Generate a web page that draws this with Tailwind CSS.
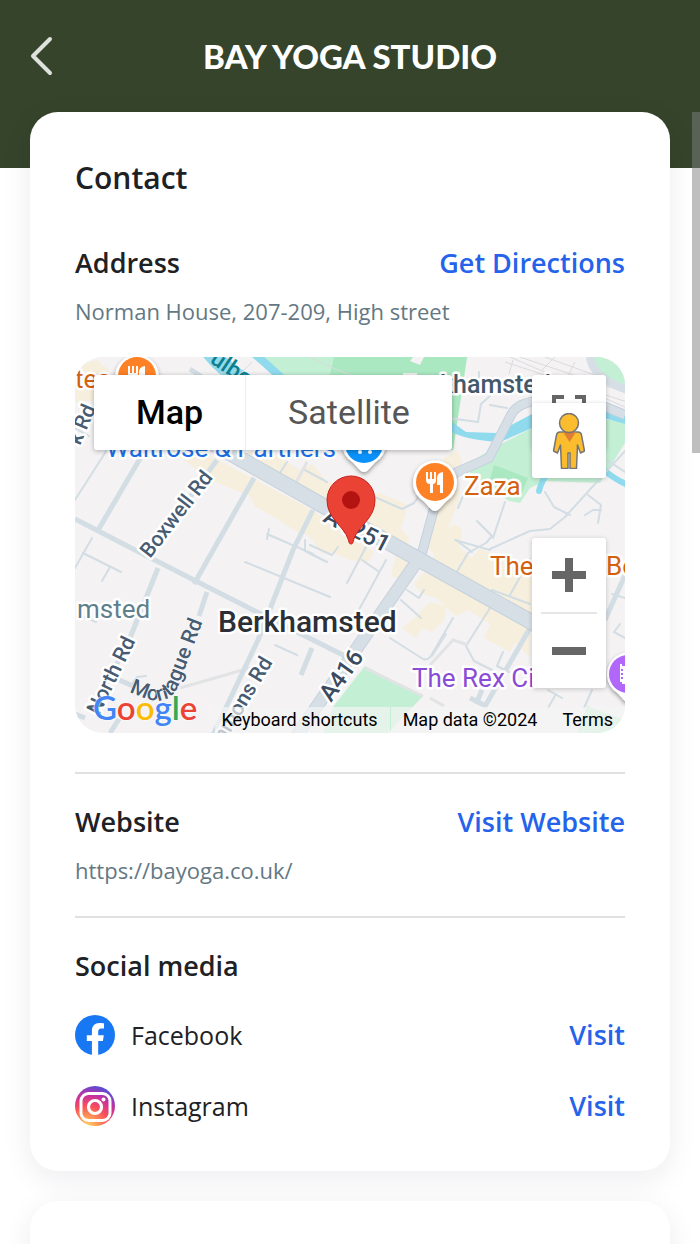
<!DOCTYPE html>
<html lang="en">
<head>
    <meta charset="UTF-8">
    <meta name="viewport" content="width=device-width, initial-scale=1.0">
    <title>Bay Yoga Studio</title>
    <script src="https://cdn.jsdelivr.net/npm/@tailwindcss/browser@4"></script>
</head>
<body class="bg-white font-['Open_Sans',sans-serif] text-[#202124]">
    <div class="relative h-screen overflow-hidden">
        <!-- Header -->
        <header class="grid h-42 grid-cols-[64px_1fr_64px] items-start bg-[#35442a]">
            <button type="button" aria-label="Back" class="flex h-28 items-center pl-[30px]">
                <svg class="h-10 w-6" viewBox="0 0 24 40" fill="none" stroke="#dfe2dc" stroke-width="4" stroke-linecap="round" stroke-linejoin="round">
                    <path d="M20 3 3 20l17 17"/>
                </svg>
            </button>
            <h1 class="text-center font-['Lato',sans-serif] text-[33px] leading-28 font-black text-white">BAY YOGA STUDIO</h1>
        </header>

        <main class="relative -mt-14 flex flex-col gap-[30px] px-[30px]">
            <section class="rounded-[28px] bg-white px-[45px] py-11 shadow-[0_8px_30px_rgba(30,30,70,0.08)]">
                <h2 class="text-[30px] leading-11 font-semibold">Contact</h2>

                <div class="mt-[45px] flex items-center justify-between leading-9 font-semibold">
                    <h3 class="text-[27px]">Address</h3>
                    <a href="#" class="text-[27px] text-[#2563eb]">Get Directions</a>
                </div>
                <p class="mt-[15px] text-[22px] leading-[30px] text-[#647883]">Norman House, 207-209, High street</p>

                <!-- Map -->
                <div class="relative mt-[31px] h-94 overflow-hidden rounded-[28px] bg-[#f4f2f3] font-['Roboto',sans-serif]">
                    <svg class="h-full w-full" viewBox="75 357 550 376" preserveAspectRatio="xMidYMid slice" role="img" aria-label="Map of Berkhamsted">
                        <defs>
                            <path id="montague" d="M129 692L144 698C160 704 174 699 179 684L211 600"/>
                            <filter id="pinShadow" x="-30%" y="-30%" width="160%" height="160%">
                                <feDropShadow dx="0" dy="2" stdDeviation="2" flood-opacity="0.4"/>
                            </filter>
                        </defs>
                        <rect x="75" y="357" width="550" height="376" fill="#f4f2f3"/>

                        <!-- Parks -->
                        <path d="M263 357H467L453 450H400L277 375Z" fill="#c3efd4"/>
                        <path d="M334 357H467L453 450H420L330 375Z" fill="#aae8c1"/>
                        <path d="M413 357h11l-4 8-10-4ZM403 373h14v6h-14Z" fill="#f4f2f3"/>
                        <path d="M463 467 490 450 532 428 625 418V443L600 483 545 481 530 488 520 503 509 501 490 488Z" fill="#c3efd4"/>
                        <path d="m494 465 34 13-7 17-31-16Z" fill="#aae8c1"/>
                        <path d="M593 357h32v34l-26-17Z" fill="#c3efd4"/>
                        <path d="m365 666 58 30-35 37h-65l10-26Z" fill="#c3efd4"/>
                        <path d="m587 706 38 14v13h-48Z" fill="#c3efd4"/>

                        <!-- High street blocks -->
                        <g fill="#f6efdd">
                            <path d="m75 366 22-6 12 10-8 30-26 2Z"/>
                            <path d="m192 446 120 64 40 28-4 10-28-12-20-2-24-16-22-12-4-10-40-16-26-20Z"/>
                            <path d="m238 448 40 8 22 14 12-6 14 16 48 20 4-8 28 12v10l-5 14 8 10-4 16-60-32-92-46Z"/>
                            <path d="m290 512 30 8 34 20 20 12-6 10-18-2-20-8-8 2-8-12Z"/>
                            <path d="m444 458 14-8 4 12-6 20 4 14-12 34 2 20-14 6-8-8 6-40Z"/>
                            <path d="m440 536 14-12 8 4-2 20 12 10 8-10 24 12 28 0v60l-50-24-50-32Z"/>
                            <path d="m396 556 14 8-8 18-11-7Z"/>
                            <path d="m424 572 36 18 70 38v30l-14-16-6 10-26-14 6-14-22-14-12 6-20-18-14-4-8-10Z"/>
                            <path d="m430 602 16 4-2 14-12 12-10-4-6 10-14-10 10-8Z"/>
                        </g>

                        <!-- River -->
                        <path d="M210 352q16 20 40 32" fill="none" stroke="#90daee" stroke-width="17"/>
                        <path d="m250 350 14 12 22 20" fill="none" stroke="#90daee" stroke-width="8"/>
                        <path d="M450 431q14 9 50 11l32-14v-14l-36 19-30-1-14-10ZM532 414l76-2v-7l17 6v13l-17-5-76 9Z" fill="#90daee"/>
                        <path d="M539 491q3-12 9-17M604 470q10 9 24 15" fill="none" stroke="#90daee" stroke-width="6" stroke-linecap="round"/>

                        <!-- Railway -->
                        <g fill="none" stroke="#d9dbde" stroke-width="1">
                            <path d="m505 362 122 40M520 357l107 36M545 357l80 29M510 357l115 50M555 357l-14 14M575 362l-10 20M513 360l-4 14"/>
                            <path d="m310 357 30 14 34 12M230 357l-10 20M252 362l-15 15"/>
                        </g>

                        <!-- Minor roads -->
                        <g fill="none" stroke="#d3dde4" stroke-width="2" stroke-linejoin="round" stroke-linecap="round">
                            <path d="M110 445 75 500M92 538 75 568M75 428l14 8"/>
                            <path d="m83 553 38 19M110 567l-8 14M84 617l12 5"/>
                            <path d="m245 562 85 35M305 540v11l22 11M310 545l22 10 6-8"/>
                            <path d="m287 462-11 17M305 470l22 12M375 497l27 12 12-6 10-14"/>
                            <path d="m267 534 46 20M269 529l-2 10"/>
                            <path d="m386 560-38 70M367 545l-20 38M362 560l16 11"/>
                            <path d="m401 600 20 18M407 590l12 8 5-8M390 638l33 21q4 2 8-3l22-38"/>
                            <path d="m455 575 13-22 18-10 6-7-15-15M456 540l16 12"/>
                            <path d="m505 502-12 36M490 549l40-18 20-2 15-12 60-66M455 540l35 10M545 492l9 15 16 8M588 495l13 10-3 18M585 515l8-5h8"/>
                            <path d="M479 372v16M490 396l-9 8-3 18-30-4M490 405l17 3M458 508l5-12"/>
                            <path d="m490 608-24 38 8 15 18 9M446 634l-14 22M492 590l38 14M510 595l20-36"/>
                            <path d="M503 652l-6 14 12 6M607 460l18 12M612 594l13 4M620 624l-6 8 11 6"/>
                            <path d="m548 690 14 8M556 694l-8 14M592 690l-8 18"/>
                            <path d="m275 645 22 10M132 684l5-7 9-1"/>
                        </g>
                        <g fill="none" stroke="#e2e3e5" stroke-width="3" stroke-linejoin="round">
                            <path d="m307 462-16 30M180 688l73-21M430 665l23-25 15 5M430 698l14 8M365 668l58 28"/>
                        </g>

                        <!-- Local roads -->
                        <g fill="none" stroke="#d3dde4" stroke-width="5" stroke-linejoin="round">
                            <path d="m75 519 62 32 120 61 90 45"/>
                            <path d="M148 445 97 532"/>
                            <path d="m217 460-68 93"/>
                            <path d="m254 478-60 106"/>
                            <path d="m158 568-30 75-30 57M207 592l-8 24M110 733l9-14M117 679l16 7M75 714l10 4"/>
                            <path d="m313 510-20 40-35 90-45 95M312 648l-11 27"/>
                            <path d="m530 628-46 80M470 698l16 8M625 575l-20 45M190 369l30 20M476 704l6-14"/>
                        </g>

                        <!-- Main roads -->
                        <path d="m420 560 15-55 20-32 34-15 22-43q6-12 26-14l40-6 48 20" fill="none" stroke="#c5d1dc" stroke-width="10"/>
                        <path d="m420 560 15-55 20-32 34-15 22-43q6-12 26-14l40-6 48 20M590 357q2 20 37 33" fill="none" stroke="#d7dfe6" stroke-width="8"/>
                        <path d="m200 436 120 68 100 56 115 64 60 36" fill="none" stroke="#c5d1dc" stroke-width="16"/>
                        <path d="m418 560-32 46-93 135" fill="none" stroke="#c5d1dc" stroke-width="13"/>
                        <path d="m200 436 120 68 100 56 115 64 60 36" fill="none" stroke="#d7dfe6" stroke-width="14"/>
                        <path d="m418 560-32 46-93 135" fill="none" stroke="#d7dfe6" stroke-width="11"/>

                        <!-- Street names -->
                        <g fill="#475c73" stroke="#fff" stroke-width="5" stroke-linejoin="round" font-size="21" font-weight="500" paint-order="stroke">
                            <text transform="translate(80 446) rotate(-67)">k Rd</text>
                            <text transform="translate(150 559) rotate(-52)">Boxwell Rd</text>
                            <text transform="translate(99 716) rotate(-64)">North Rd</text>
                            <text stroke-width="1"><textPath href="#montague">Montague Rd</textPath></text>
                            <text transform="translate(273 662) rotate(-59)" text-anchor="end">mmons Rd</text>
                            <text transform="translate(322 521) rotate(27)" font-size="24" fill="#3a4b60">A4251</text>
                            <text transform="translate(331 703) rotate(-54)" font-size="24" fill="#3a4b60">A416</text>
                            <text x="440" y="393" font-size="25" fill="#44586c">khamsted</text>
                        </g>
                        <text transform="translate(209 362) rotate(34)" fill="#0d7f8c" font-size="23" font-weight="500">ulbo</text>

                        <!-- Places -->
                        <g stroke="#fff" stroke-width="5" stroke-linejoin="round" font-size="26" paint-order="stroke">
                            <text x="75" y="388" fill="#d4610f">tes</text>
                            <text x="106" y="457" fill="#1a6fe8" font-size="26">Waitrose &amp; Partners</text>
                            <text x="464" y="495" fill="#d4610f">Zaza</text>
                            <text x="490" y="575" fill="#d4610f">The</text>
                            <text x="606" y="575" fill="#d4610f">Bo</text>
                            <text x="77" y="618" fill="#5f7f8c">msted</text>
                            <text x="412" y="687" fill="#8a4bd6">The Rex Ci</text>
                            <text x="218" y="632" fill="#2c3036" font-size="30" font-weight="500">Berkhamsted</text>
                        </g>

                        <!-- Place pins -->
                        <g filter="url(#pinShadow)">
                            <circle cx="137" cy="377" r="22" fill="#fff"/>
                            <path d="M364 472c-5 0-7-7-13-11a22 22 0 1 1 26 0c-6 4-8 11-13 11Z" fill="#fff"/>
                            <path d="M435 511c-5 0-7-7-13-11a22 22 0 1 1 26 0c-6 4-8 11-13 11Z" fill="#fff"/>
                            <path d="M629 703c-5 0-7-7-13-11a22 22 0 1 1 26 0c-6 4-8 11-13 11Z" fill="#fff"/>
                        </g>
                        <circle cx="137" cy="376" r="19" fill="#ff8125"/>
                        <circle cx="364" cy="444" r="19" fill="#0a91fb"/>
                        <circle cx="435" cy="482" r="19" fill="#ff8125"/>
                        <circle cx="628" cy="674" r="19" fill="#b067fa"/>
                        <circle cx="360" cy="452" r="2" fill="#fff"/>
                        <circle cx="370" cy="452" r="2" fill="#fff"/>
                        <g id="fork" fill="#fff">
                            <path d="M426 472h2v7h2v-7h2v7h2v-7h2v8q0 4-3 4v9h-3v-9q-4 0-4-4ZM443 472v21h-3v-8h-3v-7q0-5 6-6Z"/>
                        </g>
                        <use href="#fork" x="-298" y="-106"/>
                        <path d="M620 664h2v2h3v18h-3v-2h-2ZM621 669v2h2v-2ZM621 673v2h2v-2ZM621 677v2h2v-2Z" fill="#fff" fill-rule="evenodd"/>

                        <!-- Studio marker -->
                        <path d="M351 544c-1.500 0-2-1-2.500-4-5-15-21.500-21-21.500-40a24 24 0 0 1 48 0c0 19-16.500 25-21.500 40-.5 3-1 4-2.500 4Z" fill="#ea4335" stroke="#c5221f" stroke-width="1"/>
                        <circle cx="351" cy="500" r="9" fill="#b31412"/>
                    </svg>

                    <div class="absolute top-[18px] left-[19px] flex rounded-[3px] bg-white text-[34px] leading-[75px] shadow-[0_1px_5px_rgba(0,0,0,0.3)]">
                        <button type="button" class="w-38 border-r border-[#ececec] font-medium text-black">Map</button>
                        <button type="button" class="w-[206px] text-[#565656]">Satellite</button>
                    </div>

                    <button type="button" aria-label="Toggle fullscreen view" class="absolute top-[18px] right-[19px] h-[74px] w-[74px] rounded-[3px] bg-white shadow-[0_1px_5px_rgba(0,0,0,0.2)]">
                        <svg class="h-full w-full" viewBox="0 0 74 74" fill="none" stroke="#666" stroke-width="4">
                            <path d="M22 34V22h10M43 22h9v12M22 42v10h10M52 42v10h-9"/>
                        </svg>
                    </button>
                    <button type="button" aria-label="Show Street View" class="absolute top-[46px] right-[19px] flex h-[75px] w-[74px] items-center justify-center rounded-[3px] bg-white shadow-[0_1px_5px_rgba(0,0,0,0.2)]">
                        <svg class="h-14 w-8" viewBox="0 0 32 56" stroke="#757575" stroke-width="1.500" stroke-linejoin="round">
                            <path d="M7 19h18q3 0 3.500 3l3 16-4 2-3-8-1 23.500H17V40h-2v15.500H8.500L7.500 32l-3 8-4-2 3-16Q4 19 7 19Z" fill="#fbbc2d"/>
                            <path d="M10 19h13l-6.500 10Z" fill="#e07f31" stroke="none"/>
                            <circle cx="16" cy="10" r="9.500" fill="#fbbc2d"/>
                        </svg>
                    </button>

                    <div class="absolute right-[19px] bottom-[45px] flex w-[74px] flex-col items-center rounded-[3px] bg-white shadow-[0_1px_5px_rgba(0,0,0,0.2)]">
                        <button type="button" aria-label="Zoom in" class="flex h-[74px] items-center">
                            <svg class="h-[34px] w-[34px]" viewBox="0 0 34 34" fill="#666"><path d="M13 0h8v13h13v8H21v13h-8V21H0v-8h13Z"/></svg>
                        </button>
                        <div class="h-0.5 w-14 bg-[#e6e6e6]"></div>
                        <button type="button" aria-label="Zoom out" class="flex h-[74px] items-center">
                            <svg class="h-[34px] w-[34px]" viewBox="0 0 34 34" fill="#666"><path d="M0 13h34v8H0Z"/></svg>
                        </button>
                    </div>

                    <a href="#" aria-label="Google" class="absolute bottom-1.5 left-[18px] font-['Lato',sans-serif] text-[33px] leading-10 font-semibold [text-shadow:0_0_2px_#fff,0_0_2px_#fff]"><span class="text-[#4285f4]">G</span><span class="text-[#ea4335]">o</span><span class="text-[#fbbc05]">o</span><span class="text-[#4285f4]">g</span><span class="text-[#34a853]">l</span><span class="text-[#ea4335]">e</span></a>

                    <div class="absolute right-0 bottom-0 flex gap-px text-[18px] leading-[26px] whitespace-nowrap text-black">
                        <button type="button" class="bg-[#f5f5f5]/70 pr-3 pl-1.5">Keyboard shortcuts</button>
                        <span class="bg-[#f5f5f5]/70 px-3">Map data ©2024</span>
                        <a href="#" class="bg-[#f5f5f5]/70 px-3">Terms</a>
                    </div>
                </div>

                <hr class="mt-[39px] border-t-2 border-[#dfe0e2]">

                <div class="mt-[30px] flex items-center justify-between leading-9 font-semibold">
                    <h3 class="text-[27px]">Website</h3>
                    <a href="#" class="text-[27px] text-[#2563eb]">Visit Website</a>
                </div>
                <p class="mt-[15px] text-[22px] leading-[30px] text-[#647883]">https://bayoga.co.uk/</p>

                <hr class="mt-[31px] border-t-2 border-[#dfe0e2]">

                <h3 class="mt-[30px] text-[27px] leading-9 font-semibold">Social media</h3>
                <ul class="mt-[31px] flex flex-col gap-[31px] pb-px text-[25px] leading-10">
                    <li class="flex items-center">
                        <svg class="h-10 w-10" viewBox="0 0 40 40">
                            <circle cx="20" cy="20" r="20" fill="#1877f2"/>
                            <path d="M16.900 40V26h-5.100v-5.800h5.100v-4.400c0-5 3-7.800 7.600-7.800 2.200 0 4.500.4 4.500.4v5h-2.500c-2.500 0-3.300 1.500-3.300 3.100v3.700h5.600l-.9 5.800h-4.700v14Z" fill="#fff"/>
                        </svg>
                        <span class="ml-4">Facebook</span>
                        <a href="#" class="ml-auto text-[27px] font-semibold text-[#2563eb]">Visit</a>
                    </li>
                    <li class="flex items-center">
                        <svg class="h-10 w-10" viewBox="0 0 40 40">
                            <defs>
                                <radialGradient id="ig" cx="0.3" cy="1.05" r="1.1">
                                    <stop offset="0" stop-color="#ffdd6b"/>
                                    <stop offset="0.25" stop-color="#ff9a55"/>
                                    <stop offset="0.5" stop-color="#fa4f5b"/>
                                    <stop offset="0.75" stop-color="#c6309f"/>
                                    <stop offset="1" stop-color="#4a50dc"/>
                                </radialGradient>
                            </defs>
                            <circle cx="20" cy="20" r="20" fill="url(#ig)"/>
                            <rect x="6" y="7.500" width="29" height="27" rx="7.500" fill="none" stroke="#fff" stroke-width="3"/>
                            <circle cx="20" cy="21" r="6.500" fill="none" stroke="#fff" stroke-width="3.200"/>
                            <circle cx="28.500" cy="13.500" r="2" fill="#fff"/>
                        </svg>
                        <span class="ml-4">Instagram</span>
                        <a href="#" class="ml-auto text-[27px] font-semibold text-[#2563eb]">Visit</a>
                    </li>
                </ul>
            </section>

            <section class="h-60 rounded-[28px] bg-white shadow-[0_8px_30px_rgba(30,30,70,0.08)]"></section>
        </main>

        <!-- Scroll thumb -->
        <div class="absolute top-28 right-0 h-[341px] w-2 bg-[#7f7f7f]/50"></div>
    </div>
</body>
</html>
